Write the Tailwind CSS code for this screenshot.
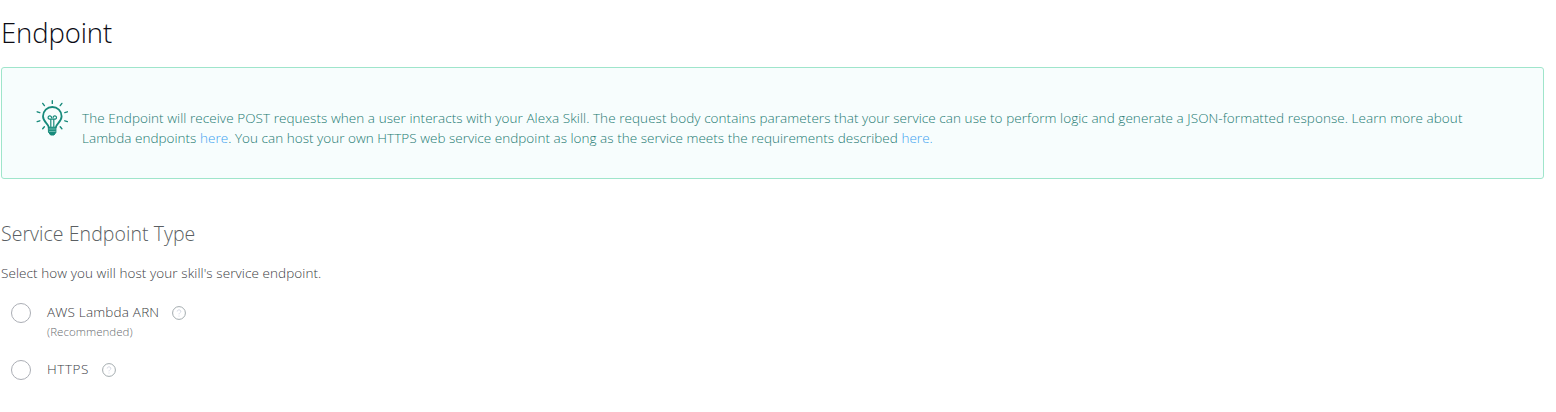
<!DOCTYPE html>
<html lang="en">
<head>
<meta charset="utf-8">
<title>Endpoint</title>
<script src="https://cdn.jsdelivr.net/npm/@tailwindcss/browser@4"></script>
</head>
<body class="h-[412px] overflow-hidden bg-white pl-px font-['Open_Sans',sans-serif] font-light text-[#3c4044]">
<main class="flex w-[1543px] flex-col">
  <h1 class="mb-px flex h-[66px] items-center whitespace-nowrap text-[27.5px] leading-8 tracking-[-0.12px] text-[#0b0b14]">Endpoint</h1>
  <section class="flex h-28 rounded-[3px] border border-[#9fe5cb] bg-[#f7fdfd] pl-[34px] pt-8">
    <svg class="size-9 shrink-0" viewBox="0 0 36 36" fill="none" stroke="#178a7b" stroke-width="1.6" stroke-linecap="round">
      <path d="M16.3 0.8V3.4M6.7 3.4L8.4 5.6M25.9 3.4L24.2 5.6M1.2 11.8L3.8 12.6M31.4 11.8L28.8 12.6M1.2 21.6L3.8 20.8M31.4 21.6L28.8 20.8M6.7 28.8L8.4 26.8M25.9 28.8L24.2 26.8" stroke-width="1.4"/>
      <path d="M12.7 27.3C12.7 24 7 22.2 7 16.3A9.3 9.3 0 0 1 25.6 16.3C25.6 22.2 19.9 24 19.9 27.3" stroke-width="1.8"/>
      <path d="M14.8 26.5V19.2H14A1.7 1.7 0 1 1 15.5 17.6M17.8 26.5V19.2H18.6A1.7 1.7 0 1 0 17.1 17.6M14.8 19.2H17.8" stroke-width="1.2"/>
      <path d="M12.7 27.2H19.9V32.4L18 35H14.6L12.7 32.4Z" fill="#178a7b" stroke-width="1"/>
      <path d="M13.5 29H19.1M13.5 31.4H19.1" stroke="#8fd0c5" stroke-width=".8"/>
    </svg>
    <p class="ml-[10px] mt-2 whitespace-nowrap text-[13.5px] leading-5 text-[#237a72]"><span class="tracking-[0.064px]">The Endpoint will receive POST requests when a user interacts with your Alexa Skill. The request body contains parameters that your service can use to perform logic and generate a JSON-formatted response. Learn more about</span><br><span class="tracking-[0.03px]">Lambda endpoints <a class="text-[#3b9ff0]">here</a>. You can host your own HTTPS web service endpoint as long as the service meets the requirements described <a class="text-[#3b9ff0]">here.</a></span></p>
  </section>
  <h2 class="mt-[41px] h-7 whitespace-nowrap text-[19.5px] leading-7 tracking-[0.05px] text-[#5b5f63]">Service Endpoint Type</h2>
  <p class="mt-[15px] h-5 whitespace-nowrap text-[13.5px] leading-5 tracking-[0.08px]">Select how you will host your skill's service endpoint.</p>
  <div class="mt-5 flex flex-col gap-[17px] pl-[10px]">
    <div class="flex h-10">
      <span class="size-5 shrink-0 rounded-full border border-[#abaeb5]"></span>
      <div class="ml-4 w-28 whitespace-nowrap">
        <div class="-mt-px h-5 text-[13.5px] leading-5 tracking-[0.19px]">AWS Lambda ARN</div>
        <div class="h-5 text-[11.5px] leading-5 tracking-[0.05px] text-[#6a6e72]">(Recommended)</div>
      </div>
      <svg class="ml-[13px] mt-[3px] size-[14px]" viewBox="0 0 14 14" fill="none" stroke="#a3abae"><circle cx="7" cy="7" r="6.4"/><path d="M5.2 5.5C5.2 3.3 8.8 3.4 8.8 5.4C8.8 6.8 7 6.9 7 8.3M7 9.6V10.5" stroke="#cfd3e0" stroke-width=".9"/></svg>
    </div>
    <div class="flex h-10">
      <span class="size-5 shrink-0 rounded-full border border-[#abaeb5]"></span>
      <div class="-mt-px ml-4 h-5 w-[42px] whitespace-nowrap text-[13.5px] leading-5 tracking-[0.55px]">HTTPS</div>
      <svg class="ml-[13px] mt-[3px] size-[14px]" viewBox="0 0 14 14" fill="none" stroke="#a3abae"><circle cx="7" cy="7" r="6.4"/><path d="M5.2 5.5C5.2 3.3 8.8 3.4 8.8 5.4C8.8 6.8 7 6.9 7 8.3M7 9.6V10.5" stroke="#cfd3e0" stroke-width=".9"/></svg>
    </div>
  </div>
</main>
</body>
</html>
